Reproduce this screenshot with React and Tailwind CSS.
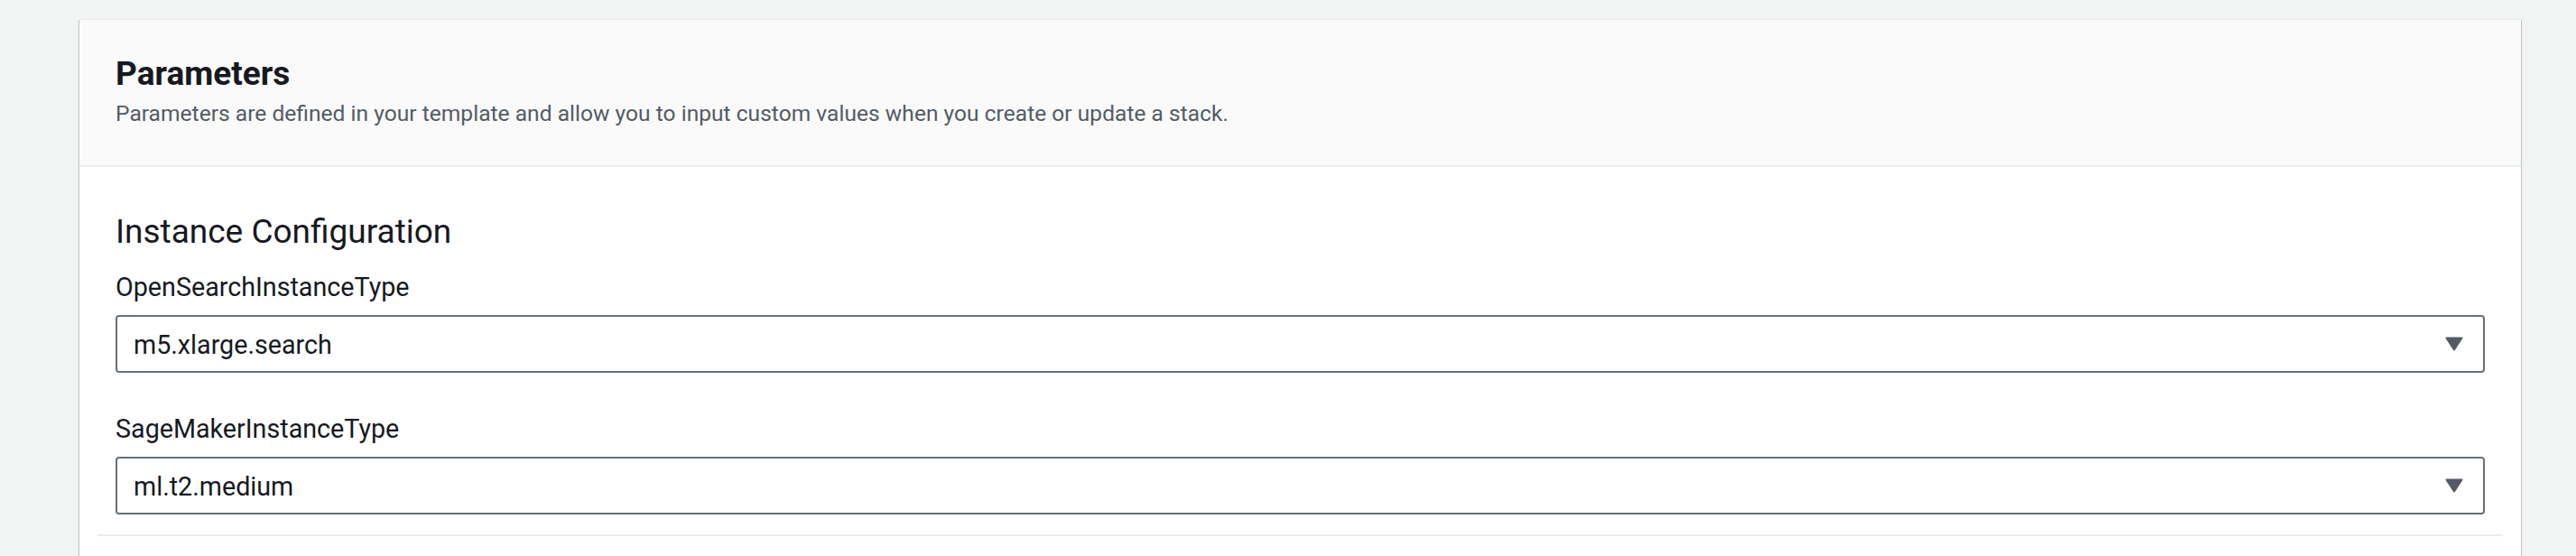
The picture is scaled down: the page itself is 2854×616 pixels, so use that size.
import React from "react";

const params = [
  { name: "OpenSearchInstanceType", value: "m5.xlarge.search" },
  { name: "SageMakerInstanceType", value: "ml.t2.medium" },
];

const Caret = () => (
  <svg width="20" height="16" viewBox="0 0 20 16" className="shrink-0">
    <path d="M1.5 1.5h17L10 14.5z" fill="#545b64" stroke="#545b64" strokeWidth="2" strokeLinejoin="round" />
  </svg>
);

const SelectField = ({ name, value, first }) => (
  <div className={first ? "" : "mt-[44px]"}>
    <label className="block text-[28.7px] leading-[36px] text-[#16191f]">{name}</label>
    <div className="mt-[13px] h-[64px] flex items-center justify-between border-2 border-[#687078] rounded-[4px] bg-white pl-[18px] pr-[22px]">
      <span className="text-[28.7px] leading-[36px] text-[#16191f] pt-[1px]">{value}</span>
      <Caret />
    </div>
  </div>
);

export default function App() {
  return (
    <div
      className="min-h-[616px] bg-[#f2f3f3] pt-[21px] pl-[88px] pr-[61px]"
      style={{ fontFamily: "Roboto, 'Noto Sans', sans-serif" }}
    >
      <div className="bg-white min-h-[595px] shadow-[0_1px_1px_0_rgba(0,28,36,0.3),1px_1px_1px_0_rgba(0,28,36,0.15),-1px_1px_1px_0_rgba(0,28,36,0.15)] border-t border-[#eaeded]">
        {/* header */}
        <div className="bg-[#fafafa] border-b-2 border-[#eaeded] px-[40px] pt-[38px] pb-[39px]">
          <h2 className="text-[37px] leading-[44px] font-bold text-[#16191f]">Parameters</h2>
          <p className="mt-[4px] text-[24.6px] leading-[36px] text-[#545b64]">
            Parameters are defined in your template and allow you to input custom values when you create or update a stack.
          </p>
        </div>

        {/* instance config */}
        <div className="pt-[50px]">
          <div className="px-[40px]">
            <h3 className="text-[37px] leading-[44px] text-[#16191f]">Instance Configuration</h3>
            <div className="mt-[21px]">
              {params.map((p, i) => (
                <SelectField key={p.name} name={p.name} value={p.value} first={i === 0} />
              ))}
            </div>
          </div>
          <div className="mx-[20px] mt-[22px] h-[2px] bg-[#eaeded]" />
        </div>
      </div>
    </div>
  );
}
